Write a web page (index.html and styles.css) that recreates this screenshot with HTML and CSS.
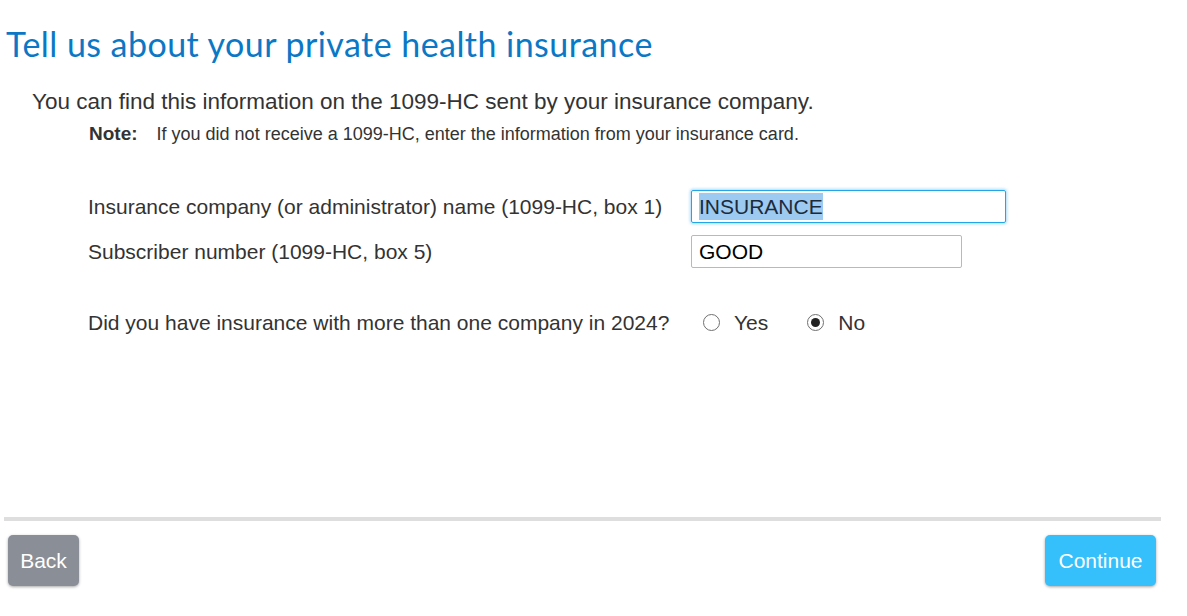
FILE: index.html
```html
<!DOCTYPE html>
<html>
<head>
<meta charset="utf-8">
<link rel="stylesheet" href="styles.css">
</head>
<body>
<div class="page">
  <h1 class="title">Tell us about your private health insurance</h1>
  <p class="intro">You can find this information on the 1099-HC sent by your insurance company.</p>
  <p class="note"><b>Note:</b><span>If you did not receive a 1099-HC, enter the information from your insurance card.</span></p>

  <div class="form">
    <div class="row">
      <label class="label">Insurance company (or administrator) name (1099-HC, box 1)</label>
      <div class="input focused"><span class="sel">INSURANCE</span></div>
    </div>
    <div class="row">
      <label class="label">Subscriber number (1099-HC, box 5)</label>
      <div class="input short">GOOD</div>
    </div>
    <div class="row question">
      <label class="label">Did you have insurance with more than one company in 2024?</label>
      <div class="radios">
        <span class="radio"><span class="circle"></span>Yes</span>
        <span class="radio"><span class="circle checked"></span>No</span>
      </div>
    </div>
  </div>

  <div class="footer">
    <hr class="divider">
    <div class="buttons">
      <button class="btn back">Back</button>
      <button class="btn continue">Continue</button>
    </div>
  </div>
</div>
</body>
</html>
```

FILE: styles.css
```css
html, body {
  margin: 0;
  padding: 0;
  background: #fff;
}
.page {
  width: 1187px;
  height: 616px;
  position: relative;
  font-family: "Liberation Sans", Arial, sans-serif;
  color: #333;
}
.title {
  margin: 0;
  padding: 24px 0 0 6px;
  font-family: Lato, "Open Sans", sans-serif;
  font-weight: 400;
  font-size: 34px;
  line-height: 40px;
  color: #0b78c6;
  letter-spacing: 0.45px;
}
.intro {
  margin: 25px 0 0 32px;
  font-size: 22.5px;
  line-height: 26px;
}
.note {
  margin: 8px 0 0 89px;
  font-size: 18px;
  line-height: 22px;
}
.note b {
  font-size: 19px;
  margin-right: 19px;
}
.form {
  margin: 39px 0 0 88px;
}
.row {
  display: flex;
  align-items: center;
  height: 45px;
}
.row.question {
  margin-top: 26px;
}
.label {
  width: 603px;
  font-size: 21px;
}
.input {
  box-sizing: border-box;
  width: 315px;
  height: 33px;
  border: 1px solid #b9b9b9;
  border-radius: 2px;
  font-size: 21px;
  line-height: 31px;
  padding-left: 7px;
  color: #000;
}
.input.focused {
  border-color: #22a6e8;
  box-shadow: 0 0 3px 1px rgba(60, 170, 240, 0.45);
}
.input.short {
  width: 271px;
}
.sel {
  background: #9ccaf0;
  color: #1d2a3a;
  padding: 2px 0;
}
.radios {
  display: flex;
  gap: 39px;
  font-size: 21px;
  margin-left: 12px;
}
.radio {
  display: flex;
  align-items: center;
  gap: 14px;
}
.circle {
  box-sizing: border-box;
  width: 17px;
  height: 17px;
  border: 1px solid #707070;
  border-radius: 50%;
  display: inline-block;
  position: relative;
}
.circle.checked::after {
  content: "";
  position: absolute;
  left: 3px;
  top: 3px;
  width: 9px;
  height: 9px;
  border-radius: 50%;
  background: #222;
}
.footer {
  position: absolute;
  left: 0;
  top: 517px;
  width: 1187px;
}
.divider {
  margin: 0 0 0 4px;
  width: 1157px;
  height: 4px;
  border: 0;
  background: #dedede;
}
.buttons {
  display: flex;
  justify-content: space-between;
  padding: 14px 31px 0 8px;
}
.btn {
  height: 51px;
  border: 0;
  border-radius: 5px;
  color: #fff;
  font-family: "Liberation Sans", Arial, sans-serif;
  font-size: 21px;
  box-shadow: 0 1px 3px rgba(0, 0, 0, 0.35);
  padding: 0 10px;
}
.back {
  width: 71px;
  background: #8a8e96;
}
.continue {
  width: 111px;
  background: #35c0fb;
}
```
